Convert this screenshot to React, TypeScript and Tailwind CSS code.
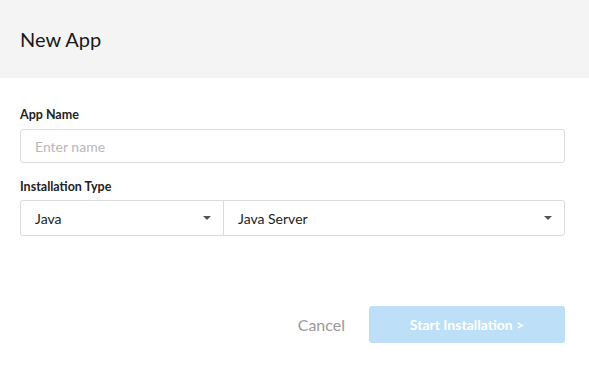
export default function App() {
  return (
    <div className="min-h-screen bg-white font-['Lato',sans-serif] text-[#222]">
      <div className="flex h-[78px] items-center bg-[#f4f4f4] pl-5 pr-6">
        <h1 className="text-[20px] font-normal text-[#1a1a1a]">New App</h1>
      </div>
      <div className="pl-5 pr-6 pt-[30px]">
        <label className="block text-[12.5px] font-bold leading-[14px] text-[#222]">
          App Name
        </label>
        <input
          className="mt-[7px] block h-[34px] w-full rounded-[3px] border border-[#dcdcdc] px-[14px] text-[14px] outline-none placeholder:text-[#b8b8b8]"
          placeholder="Enter name"
        />
        <label className="mt-[17px] block text-[12.5px] font-bold leading-[14px] text-[#222]">
          Installation Type
        </label>
        <div className="mt-[6px] flex h-[36px] rounded-[3px] border border-[#dcdcdc]">
          <div className="flex w-[203px] items-center justify-between border-r border-[#dcdcdc] pl-[14px] pr-[12px] text-[14px] text-[#222]">
            <span>Java</span>
            <span className="h-0 w-0 border-x-[4px] border-t-[4px] border-x-transparent border-t-[#555]" />
          </div>
          <div className="flex flex-1 items-center justify-between pl-[14px] pr-[12px] text-[14px] text-[#222]">
            <span>Java Server</span>
            <span className="h-0 w-0 border-x-[4px] border-t-[4px] border-x-transparent border-t-[#555]" />
          </div>
        </div>
        <div className="mt-[70px] flex items-center justify-end gap-6">
          <button className="text-[16px] text-[#9a9a9a]">Cancel</button>
          <button className="h-[37px] w-[196px] rounded-[3px] bg-[#bde0f8] text-[14px] font-bold text-white">
            Start Installation &gt;
          </button>
        </div>
      </div>
    </div>
  );
}
